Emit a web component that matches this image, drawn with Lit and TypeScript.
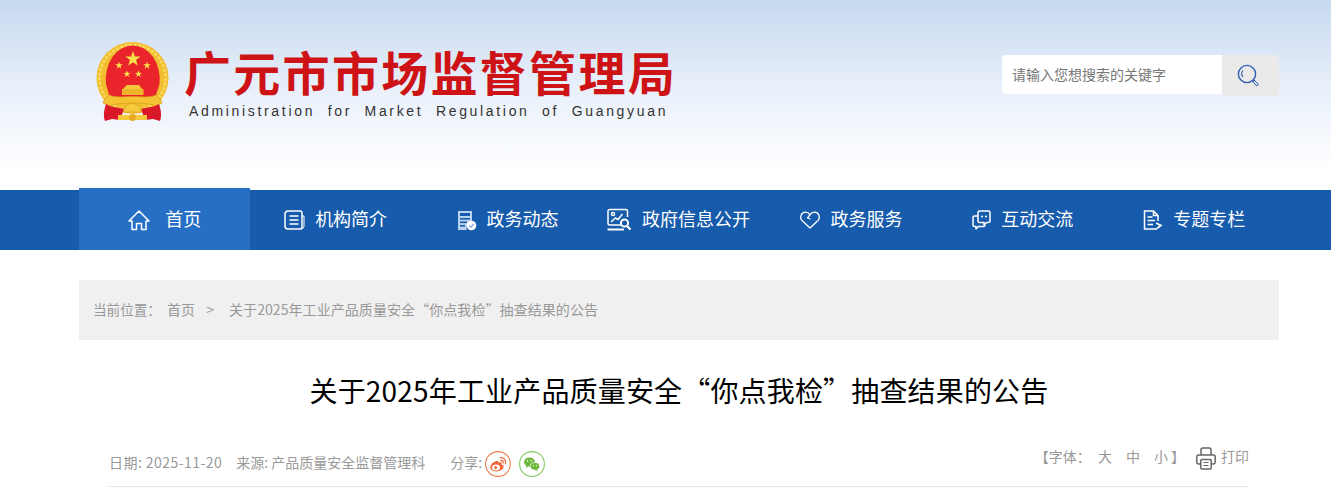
import { LitElement, html, css, svg } from "lit";
import { customElement } from "lit/decorators.js";

const star = (cx: number, cy: number, r: number) => {
  const pts: string[] = [];
  for (let i = 0; i < 10; i++) {
    const a = -Math.PI / 2 + (i * Math.PI) / 5;
    const rr = i % 2 ? r * 0.4 : r;
    pts.push(`${(cx + rr * Math.cos(a)).toFixed(2)},${(cy + rr * Math.sin(a)).toFixed(2)}`);
  }
  return svg`<polygon points=${pts.join(" ")} fill="#fbe04a"/>`;
};

const emblem = html`<svg class="emblem" viewBox="96 42 74 80" width="74" height="80">
  <circle cx="132.5" cy="78" r="36" fill="#f2bd2e"/>
  <circle cx="132.5" cy="78" r="33" fill="none" stroke="#fbdc62" stroke-width="2.6" stroke-dasharray="3 1.6"/>
  <path d="M106 84 A27 34 0 1 1 159.5 84 L155 98 H110 Z" fill="#e9252b"/>
  ${star(133, 59, 8)}${star(119, 65.5, 4)}${star(147, 65.5, 4)}${star(127, 74, 3.6)}${star(138.5, 74, 3.6)}
  <path d="M127 85 H139 L142 89 H123 Z" fill="#f6c93c"/>
  <rect x="122" y="89" width="21.5" height="6" fill="#eeb52a"/>
  <path d="M103 103 C104 99 107 96 109 95 C116 98 124 96.5 133 96.5 C142 96.5 150 98 156 95 C158 96 161 99 162 103 L156 106 C148 102 118 102 110 106 Z" fill="#f4c233" stroke="#d99a1c" stroke-width=".7"/>
  <path d="M106 104 C112 108 119 107 124 109 L120 120 L112 119 L105 121 C103 116 104 110 106 104 Z" fill="#d9182a"/>
  <path d="M159 104 C153 108 146 107 141 109 L145 120 L153 119 L160 121 C162 116 161 110 159 104 Z" fill="#d9182a"/>
  <path d="M118 115 H147 V120 H118 Z" fill="#f6c93c"/>
  <path d="M124 110 A8.5 6.5 0 0 1 141 110 L141 112 H124 Z" fill="#f6c93c" stroke="#d99a1c" stroke-width=".7"/>
  <circle cx="132.5" cy="117.5" r="3.4" fill="#e9a81f"/>
</svg>`;

const icons = {
  home: html`<svg width="22" height="21" viewBox="0 0 22 21" fill="none" stroke="#fff" stroke-width="1.5" stroke-linejoin="round"><path d="M1 11 L11 1 L21 11 H18 V19.5 H13.5 V13.5 H8.5 V19.5 H4 V11 Z"/></svg>`,
  org: html`<svg width="21" height="20" viewBox="0 0 21 20" fill="none" stroke="#fff" stroke-width="1.5" stroke-linecap="round"><path d="M4 1 H16 A2 2 0 0 1 18 3 V17 A2 2 0 0 1 16 19 H4 A3 3 0 0 1 1 16 V4 A3 3 0 0 1 4 1 Z"/><path d="M6 6 H14 M6 10 H14 M6 14 H14"/><path d="M18 6 H20 V17 L18 19" stroke-width="1"/></svg>`,
  news: html`<svg width="20" height="21" viewBox="0 0 20 21"><path d="M1 1 H15 V13 A5 5 0 0 0 10 20 H1 Z" fill="#b9d2ef"/><rect x="3" y="3" width="10" height="3" fill="#175bac"/><rect x="3" y="8" width="10" height="1.6" fill="#175bac"/><rect x="3" y="11.5" width="7" height="1.6" fill="#175bac"/><rect x="3" y="15" width="5" height="1.6" fill="#175bac"/><circle cx="14.5" cy="15.5" r="4.8" fill="#fff"/><path d="M12.3 15.5 L14 17.2 L16.8 14" fill="none" stroke="#7fa8d8" stroke-width="1.2"/></svg>`,
  info: html`<svg width="25" height="24" viewBox="0 0 25 24" fill="none" stroke="#fff" stroke-width="1.5"><path d="M15 17 H2.5 A1.5 1.5 0 0 1 1 15.5 V3 A1.5 1.5 0 0 1 2.5 1.5 H19 A1.5 1.5 0 0 1 20.5 3 V9"/><path d="M0.5 21.5 H17" stroke-width="2"/><circle cx="6" cy="6" r="1.6"/><path d="M4 14 L8.5 10 L11 11.5 L15.5 6"/><circle cx="17.5" cy="15" r="3.6" stroke-width="2" fill="#175bac"/><path d="M20 18 L23.5 21.5" stroke-width="2.2"/></svg>`,
  service: html`<svg width="20" height="18" viewBox="0 0 20 18" fill="none" stroke="#fff" stroke-width="1.3" stroke-linejoin="round"><path d="M10 17 L2 9.5 C-0.5 6.8 0.8 1.2 5.5 1.2 C7.5 1.2 9 2.2 10 3.8 L7.5 7 L10.5 8 M10 3.8 C11 2.2 12.5 1.2 14.5 1.2 C19.2 1.2 20.5 6.8 18 9.5 L10 17"/></svg>`,
  chat: html`<svg width="19" height="20" viewBox="0 0 19 20" fill="none" stroke="#fff" stroke-width="1.5" stroke-linejoin="round"><path d="M7.5 1 H16.5 A1.5 1.5 0 0 1 18 2.5 V11 A1.5 1.5 0 0 1 16.5 12.5 H14.5 L12 15 V12.5 H7.5 A1.5 1.5 0 0 1 6 11 V2.5 A1.5 1.5 0 0 1 7.5 1 Z"/><path d="M6 6 H2.5 A1.5 1.5 0 0 0 1 7.5 V15 A1.5 1.5 0 0 0 2.5 16.5 H4 V19 L6.5 16.5 H11.5 A1.5 1.5 0 0 0 13 15"/><circle cx="10" cy="6.5" r="1" fill="#fff" stroke="none"/><circle cx="14" cy="6.5" r="1" fill="#fff" stroke="none"/></svg>`,
  topic: html`<svg width="20" height="20" viewBox="0 0 20 20" fill="none" stroke="#fff" stroke-width="1.5"><path d="M15 11 V5.5 L10.5 1 H1.5 V19 H14"/><path d="M10.5 1 V5.5 H15"/><path d="M4.5 7 H9.5 M4.5 10.5 H12 M4.5 14.5 H10"/><path d="M13 13 L18 15.5 L14 18.5" stroke-width="1.6"/></svg>`,
};

const navItems = [
  { t: "首页", i: icons.home, cls: "active" },
  { t: "机构简介", i: icons.org, cls: "l" },
  { t: "政务动态", i: icons.news, cls: "" },
  { t: "政府信息公开", i: icons.info, cls: "l" },
  { t: "政务服务", i: icons.service, cls: "r" },
  { t: "互动交流", i: icons.chat, cls: "r" },
  { t: "专题专栏", i: icons.topic, cls: "r" },
];

const headline = "关于2025年工业产品质量安全“你点我检”抽查结果的公告";

@customElement("app-root")
export class AppRoot extends LitElement {
  static styles = css`
    :host {
      display: block;
      font-family: "Noto Sans CJK SC", "Liberation Sans", sans-serif;
      background: #fff;
      height: 494px;
      overflow: hidden;
    }
    .wrap { width: 1200px; margin-left: 79px; }
    .header { height: 190px; background: linear-gradient(#c7d9f0 0, #e9f0fa 90px, #fff 172px); }
    .header .wrap { display: flex; align-items: flex-start; padding-top: 42px; }
    .emblem { margin-left: 17px; flex: none; }
    .brand { margin-left: 14px; margin-top: 4px; }
    .cn {
      font-size: 47px; line-height: 50px; font-weight: 700; color: #cd1315;
      letter-spacing: 2.3px; white-space: nowrap;
    }
    .en {
      font-family: "Liberation Sans", sans-serif; font-size: 14px; line-height: 16px;
      color: #333; letter-spacing: 2.67px; word-spacing: 6px; white-space: nowrap;
      margin-top: 7px; margin-left: 5px;
    }
    .search { margin-left: auto; margin-top: 13px; display: flex; align-items: flex-start; }
    .input {
      width: 210px; height: 39px; padding-left: 10px; background: #fff; border-radius: 4px 0 0 4px;
      font-size: 14px; line-height: 39px; color: #777; white-space: nowrap;
    }
    .btn {
      width: 53px; height: 41px; padding-right: 4px; background: #ebe9e9; border-radius: 0 4px 4px 0;
      display: flex; align-items: center; justify-content: center;
    }
    .nav { height: 60px; background: #175bac; }
    .nav .wrap { display: flex; height: 60px; }
    .item {
      flex: 0 0 171.43px; display: flex; align-items: center; justify-content: center; gap: 10px;
      color: #fff; font-size: 18px; white-space: nowrap; box-sizing: border-box;
    }
    .item span { margin-bottom: 4px; }
    .item svg { flex: none; }
    .item.l { padding-right: 1px; }
    .item.r { padding-left: 2px; }
    .item.active { background: #276fc5; height: 62px; margin-top: -2px; gap: 15px; padding-top: 2px; }
    .crumb {
      margin-top: 30px; height: 60px; background: #f0f0f0; display: flex; align-items: center;
      padding-left: 14px; font-size: 14px; color: #999; white-space: pre;
    }
    .crumb span { margin-bottom: 2px; }
    .crumb .first { font-size: 13.6px; }
    .crumb .sep { margin-left: 5px; margin-right: 15px; }
    .crumb .home { margin-left: 6px; }
    .crumb .path { letter-spacing: 0.07px; }
    .title {
      margin: 29px 0 0; font-size: 28px; line-height: 42px; font-weight: 400; color: #000;
      text-align: center; letter-spacing: 0.17px;
    }
    .meta {
      margin: 27px 30px 0; height: 48px; border-bottom: 1px solid #e5e5e5;
      display: flex; justify-content: space-between; align-items: flex-start;
      font-size: 14px; color: #999;
    }
    .left { display: flex; align-items: center; height: 26px; margin-top: 13px; white-space: pre; }
    .left span { margin-bottom: 4px; }
    .left .date { letter-spacing: 0.45px; }
    .left .src { margin-left: 14px; }
    .left .share { margin-left: 25px; margin-right: 3px; }
    .left .wx { margin-left: 8px; }
    .right { display: flex; align-items: center; height: 24px; margin-top: 7px; white-space: pre; }
    .right span { margin-bottom: 2px; }
    .right .da { margin-left: 4px; }
    .right .size { margin-left: 14px; }
    .right .close { margin-left: 3px; }
    .right .printer { margin-left: 11px; margin-right: 5px; margin-top: 2px; }
  `;

  render() {
    return html`
      <div class="header">
        <div class="wrap">
          ${emblem}
          <div class="brand">
            <div class="cn">广元市市场监督管理局</div>
            <div class="en">Administration for Market Regulation of Guangyuan</div>
          </div>
          <div class="search">
            <div class="input">请输入您想搜索的关键字</div>
            <div class="btn">
              <svg width="23" height="24" viewBox="0 0 23 24" fill="none" stroke="#2f5fb0" stroke-width="1.4">
                <circle cx="10" cy="10" r="8.6"/>
                <path d="M6 6.5 A5 5 0 0 0 6 13" stroke-width="1.1"/>
                <path d="M16.2 16.5 L20.8 21.5" stroke-width="3" stroke="#2f5fb0"/>
                <path d="M17 17.4 L20.3 21" stroke-width="1.2" stroke="#fff"/>
              </svg>
            </div>
          </div>
        </div>
      </div>
      <div class="nav">
        <div class="wrap">
          ${navItems.map((n) => html`<div class="item ${n.cls}">${n.i}<span>${n.t}</span></div>`)}
        </div>
      </div>
      <div class="wrap">
        <div class="crumb"><span class="first">当前位置：</span><span class="home">首页</span><span class="sep">  &gt;</span><span class="path">${headline}</span></div>
        <h1 class="title">${headline}</h1>
        <div class="meta">
          <div class="left">
            <span class="date">日期: 2025-11-20</span><span class="src">来源: 产品质量安全监督管理科</span>
            <span class="share">分享:</span>
            <svg width="26" height="26" viewBox="0 0 26 26" fill="none">
              <circle cx="13" cy="13" r="12.4" stroke="#ef7a4a" stroke-width="1.1"/>
              <path d="M11.5 10 C7.5 11 4.5 14.5 5.6 17.5 C6.8 20.8 13 21.3 16.5 19 C19.5 17 19.3 14.2 16.5 13.6 C17.2 11.8 16.2 10.8 13.5 11.6 C13.8 10.4 13 9.6 11.5 10 Z" fill="#f0673a"/>
              <ellipse cx="11" cy="16.4" rx="4" ry="3" fill="#fff"/>
              <circle cx="10.6" cy="16.6" r="1.5" fill="#f0673a"/>
              <path d="M15.5 6.8 C19 6.2 21.6 9.4 20.4 12.8 M15.8 9.4 C17.5 9.1 18.6 10.5 18.1 12" stroke="#f0673a" stroke-width="1.3" stroke-linecap="round"/>
            </svg>
            <svg class="wx" width="26" height="26" viewBox="0 0 26 26" fill="none">
              <circle cx="13" cy="13" r="12.4" stroke="#86c764" stroke-width="1.1"/>
              <ellipse cx="10.5" cy="11" rx="5.5" ry="4.6" fill="#6fb83f"/>
              <path d="M7.5 14 L7 17 L10 15 Z" fill="#6fb83f"/>
              <ellipse cx="16" cy="15.3" rx="4.8" ry="3.9" fill="#6fb83f" stroke="#fff" stroke-width=".7"/>
              <path d="M18 18 L19.2 20 L15.8 18.8 Z" fill="#6fb83f"/>
              <circle cx="8.6" cy="9.8" r=".8" fill="#fff"/><circle cx="12.2" cy="9.8" r=".8" fill="#fff"/>
              <circle cx="14.4" cy="14.6" r=".6" fill="#fff"/><circle cx="17.6" cy="14.6" r=".6" fill="#fff"/>
            </svg>
          </div>
          <div class="right">
            <span>【字体：</span><span class="da"> 大</span><span class="size">中</span><span class="size">小</span><span class="close size">】</span>
            <svg class="printer" width="20" height="23" viewBox="0 0 20 23" fill="none" stroke="#666" stroke-width="1.5">
              <path d="M5 8 V3 A2 2 0 0 1 7 1 H13 A2 2 0 0 1 15 3 V8"/>
              <path d="M4.5 17 H2.5 A1.7 1.7 0 0 1 .8 15.3 V9.8 A1.7 1.7 0 0 1 2.5 8 H17.5 A1.7 1.7 0 0 1 19.2 9.8 V15.3 A1.7 1.7 0 0 1 17.5 17 H15.5"/>
              <rect x="4.8" y="12.5" width="10.4" height="9.5" rx="1"/>
              <path d="M7.5 15.5 H12.5 M7.5 18.5 H12.5" stroke-width="1.2"/>
            </svg>
            <span>打印</span>
          </div>
        </div>
      </div>
    `;
  }
}
